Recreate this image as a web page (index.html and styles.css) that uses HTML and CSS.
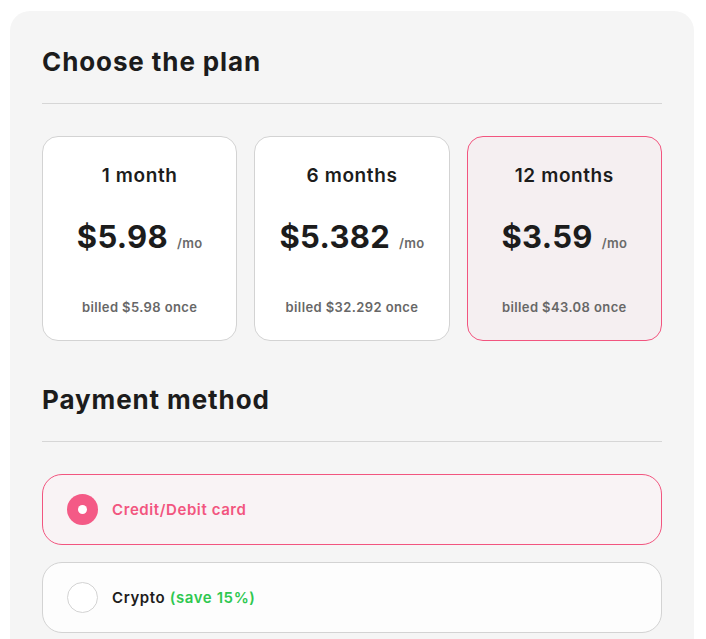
FILE: index.html
```html
<!DOCTYPE html>
<html lang="en">
<head>
<meta charset="utf-8">
<title>Choose the plan</title>
<link rel="stylesheet" href="styles.css">
</head>
<body>
<div class="panel">
  <h2 class="section-title">Choose the plan</h2>
  <hr class="divider">
  <div class="plans">
    <div class="plan">
      <div class="plan-name">1 month</div>
      <div class="plan-price"><span class="amount">$5.98</span><span class="per">/mo</span></div>
      <div class="plan-billed">billed $5.98 once</div>
    </div>
    <div class="plan">
      <div class="plan-name">6 months</div>
      <div class="plan-price"><span class="amount">$5.382</span><span class="per">/mo</span></div>
      <div class="plan-billed">billed $32.292 once</div>
    </div>
    <div class="plan selected">
      <div class="plan-name">12 months</div>
      <div class="plan-price"><span class="amount">$3.59</span><span class="per">/mo</span></div>
      <div class="plan-billed">billed $43.08 once</div>
    </div>
  </div>

  <h2 class="section-title payment-title">Payment method</h2>
  <hr class="divider">
  <div class="methods">
    <div class="method selected">
      <span class="radio"></span>
      <span class="method-label">Credit/Debit card</span>
    </div>
    <div class="method">
      <span class="radio"></span>
      <span class="method-label">Crypto <span class="save">(save 15%)</span></span>
    </div>
  </div>
</div>
</body>
</html>
```

FILE: styles.css
```css
* { box-sizing: border-box; }

html, body {
  margin: 0;
  padding: 0;
  background: #ffffff;
}

body {
  font-family: "Inter", "Roboto", "Liberation Sans", sans-serif;
  color: #1c1c1c;
  padding: 11px 12px 0 10px;
}

.panel {
  background: #f5f5f5;
  border-radius: 20px 20px 0 0;
  padding: 32px 32px 40px;
  min-height: 700px;
}

.section-title {
  margin: 0;
  font-size: 26px;
  line-height: 38px;
  font-weight: 700;
  letter-spacing: 0.9px;
  color: #1c1c1c;
}

.payment-title {
  margin-top: 40px;
}

.divider {
  border: 0;
  height: 1px;
  background: #d6d6d6;
  margin: 22px 0 32px;
}

.plans {
  display: grid;
  grid-template-columns: repeat(3, 1fr);
  gap: 17px;
}

.plan {
  height: 205px;
  background: #ffffff;
  border: 1px solid #d3d3d3;
  border-radius: 16px;
  display: flex;
  flex-direction: column;
  align-items: center;
  padding-top: 26px;
}

.plan.selected {
  background: #f5eff1;
  border-color: #f2557f;
}

.plan-name {
  font-size: 19px;
  line-height: 26px;
  font-weight: 600;
  letter-spacing: 0.6px;
  color: #1c1c1c;
}

.plan-price {
  margin-top: 28px;
  display: flex;
  align-items: baseline;
  gap: 9px;
  height: 40px;
}

.amount {
  font-size: 31px;
  line-height: 40px;
  font-weight: 700;
  color: #1c1c1c;
  letter-spacing: 0.3px;
}

.per {
  font-size: 13px;
  font-weight: 600;
  letter-spacing: 0.3px;
  color: #6a6a6a;
}

.plan-billed {
  margin-top: 41px;
  font-size: 13px;
  line-height: 18px;
  font-weight: 600;
  letter-spacing: 0.4px;
  color: #676767;
}

.methods {
  display: flex;
  flex-direction: column;
  gap: 17px;
}

.method {
  height: 71px;
  border: 1px solid #d3d3d3;
  border-radius: 20px;
  background: #fdfdfd;
  display: flex;
  align-items: center;
  padding-left: 24px;
  gap: 14px;
}

.method.selected {
  background: #f9f3f5;
  border-color: #f2557f;
}

.radio {
  width: 31px;
  height: 31px;
  border-radius: 50%;
  border: 1px solid #d3d3d3;
  background: #ffffff;
  flex: none;
  position: relative;
}

.method.selected .radio {
  border: 0;
  background: #f45a86;
}

.method.selected .radio::after {
  content: "";
  position: absolute;
  left: 50%;
  top: 50%;
  width: 9px;
  height: 9px;
  margin: -4.5px 0 0 -4.5px;
  border-radius: 50%;
  background: #ffffff;
}

.method-label {
  font-size: 15px;
  font-weight: 600;
  letter-spacing: 0.6px;
  color: #1c1c1c;
}

.method.selected .method-label {
  color: #f2557f;
}

.save {
  color: #2ec850;
}
```
